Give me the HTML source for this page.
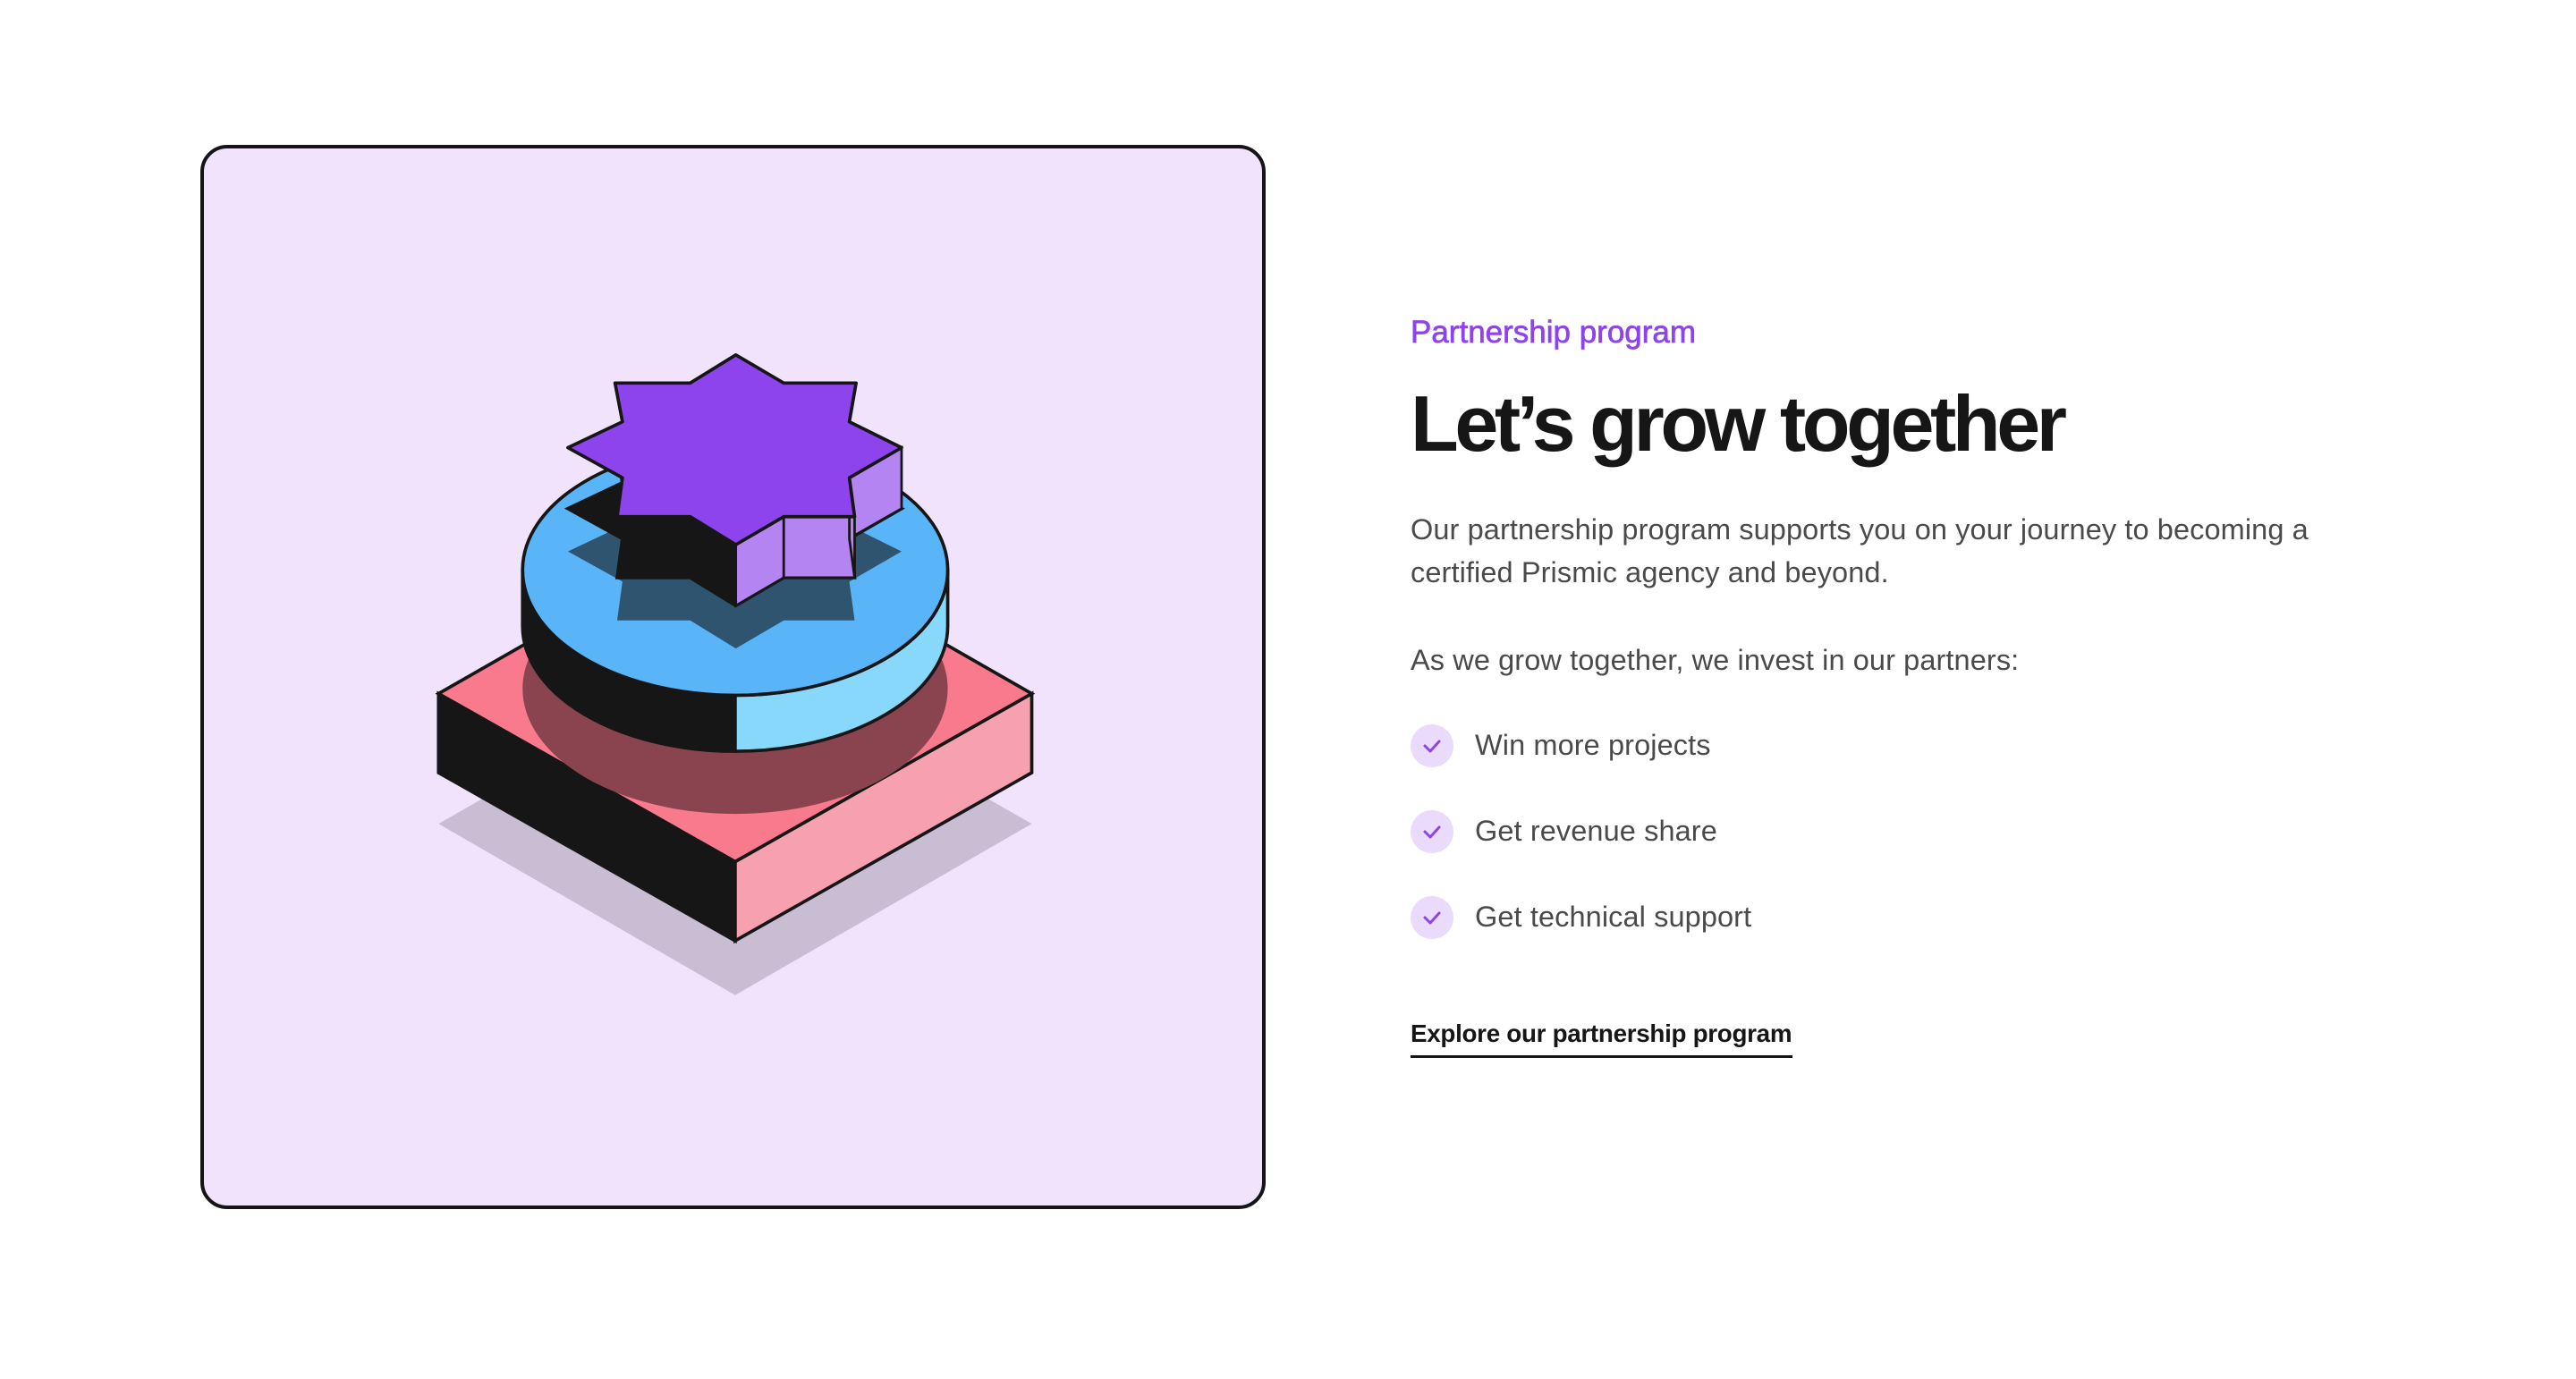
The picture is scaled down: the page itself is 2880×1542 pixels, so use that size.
<!DOCTYPE html>
<html><head><meta charset="utf-8"><style>
html,body{margin:0;padding:0;background:#fff;width:2880px;height:1542px;overflow:hidden;font-family:"Liberation Sans",sans-serif}
.card{position:absolute;left:224px;top:162px;width:1183px;height:1182px;background:#f2e3fc;border:4px solid #151515;border-radius:30px}
svg.ill{position:absolute;left:0;top:0}
.t{position:absolute;left:1577px;white-space:nowrap}
.eyebrow{color:#8e44ec;font-size:35px;line-height:50px;top:347px;-webkit-text-stroke:0.7px #8e44ec}
.h{color:#161616;font-size:88px;font-weight:bold;letter-spacing:-4.4px;line-height:100px;top:424px}
.p{color:#4a4a4a;font-size:32.5px;line-height:48px;letter-spacing:0.1px}
.li{position:absolute;left:1577px;width:48px;height:48px;border-radius:50%;background:#eadbfc}
.ck{position:absolute;left:1587px}
.lt{position:absolute;left:1649px;color:#4a4a4a;font-size:32.5px;line-height:48px;white-space:nowrap;letter-spacing:0.1px}
.link{color:#161616;font-size:27.8px;font-weight:bold;line-height:40px;top:1136px;letter-spacing:-0.3px}
.ul{position:absolute;left:1577px;top:1180px;width:427px;height:3px;background:#161616}
</style></head><body>
<div class="card"></div>
<svg class="ill" width="2880" height="1542" viewBox="0 0 1563 837">
<defs>
<clipPath id="ct"><ellipse cx="446" cy="346" rx="129" ry="76"/></clipPath>
<g id="star"><polygon points="446.4,215.4 475.5,232.5 519.4,232.5 515.3,256 547,271.7 515.3,290 518.5,313.6 475.5,313.6 446.4,330.6 418.7,313.6 374.4,313.6 377.6,290 344.5,271.7 377.6,256 373.1,232.5 418.7,232.5"/></g>
</defs>
<polygon points="266,500 446,397 626,500 446,604" fill="#c9bdd3"/>
<polygon points="266,421 446,523 446,571 266,469" fill="#161616" stroke="#161616" stroke-width="2"/>
<polygon points="446,523 626,421 626,469 446,571" fill="#f7a1b0" stroke="#161616" stroke-width="2"/>
<polygon points="266,421 446,318 626,421 446,523" fill="#f87a8c" stroke="#161616" stroke-width="2"/>
<ellipse cx="446" cy="418" rx="129" ry="76" fill="#8a4450"/>
<path d="M317,346 L317,380 A129,76 0 0 0 446,456 L446,422 A129,76 0 0 1 317,346Z" fill="#161616" stroke="#161616" stroke-width="2"/>
<path d="M575,346 L575,380 A129,76 0 0 1 446,456 L446,422 A129,76 0 0 0 575,346Z" fill="#88d8fc" stroke="#161616" stroke-width="2"/>
<ellipse cx="446" cy="346" rx="129" ry="76" fill="#5ab4f8" stroke="#161616" stroke-width="2"/>
<g clip-path="url(#ct)"><use href="#star" transform="translate(0,63)" fill="#2f5470"/></g>
<use href="#star" transform="translate(0,37)" fill="#161616" stroke="#161616" stroke-width="2"/>
<polygon points="446.4,330.6 475.5,313.6 475.5,350.6 446.4,367.6" fill="#b484f2" stroke="#161616" stroke-width="1.5"/>
<polygon points="475.5,313.6 518.5,313.6 518.5,350.6 475.5,350.6" fill="#b484f2" stroke="#161616" stroke-width="1.5"/>
<polygon points="515.3,290 547,271.7 547,308.7 518.5,325" fill="#b484f2" stroke="#161616" stroke-width="1.5"/>
<polygon points="515.3,290 518.5,313.6 518.5,350.6 515.3,327" fill="#b484f2" stroke="#161616" stroke-width="1.5"/>
<use href="#star" fill="#8e44ec" stroke="#161616" stroke-width="2" stroke-linejoin="round"/>
</svg>
<div class="t eyebrow">Partnership program</div>
<div class="t h">Let’s grow together</div>
<div class="t p" style="top:568px">Our partnership program supports you on your journey to becoming a</div>
<div class="t p" style="top:616px">certified Prismic agency and beyond.</div>
<div class="t p" style="top:714px">As we grow together, we invest in our partners:</div>
<div class="li" style="top:810px"></div><svg class="ck" style="top:820px" width="28" height="28" viewBox="0 0 28 28"><path d="M6 14 L12 20 L22 9" fill="none" stroke="#8e44ec" stroke-width="3" stroke-linecap="round" stroke-linejoin="round"/></svg>
<div class="lt" style="top:809px">Win more projects</div>
<div class="li" style="top:906px"></div><svg class="ck" style="top:916px" width="28" height="28" viewBox="0 0 28 28"><path d="M6 14 L12 20 L22 9" fill="none" stroke="#8e44ec" stroke-width="3" stroke-linecap="round" stroke-linejoin="round"/></svg>
<div class="lt" style="top:905px">Get revenue share</div>
<div class="li" style="top:1002px"></div><svg class="ck" style="top:1012px" width="28" height="28" viewBox="0 0 28 28"><path d="M6 14 L12 20 L22 9" fill="none" stroke="#8e44ec" stroke-width="3" stroke-linecap="round" stroke-linejoin="round"/></svg>
<div class="lt" style="top:1001px">Get technical support</div>
<div class="t link">Explore our partnership program</div>
<div class="ul"></div>
</body></html>
